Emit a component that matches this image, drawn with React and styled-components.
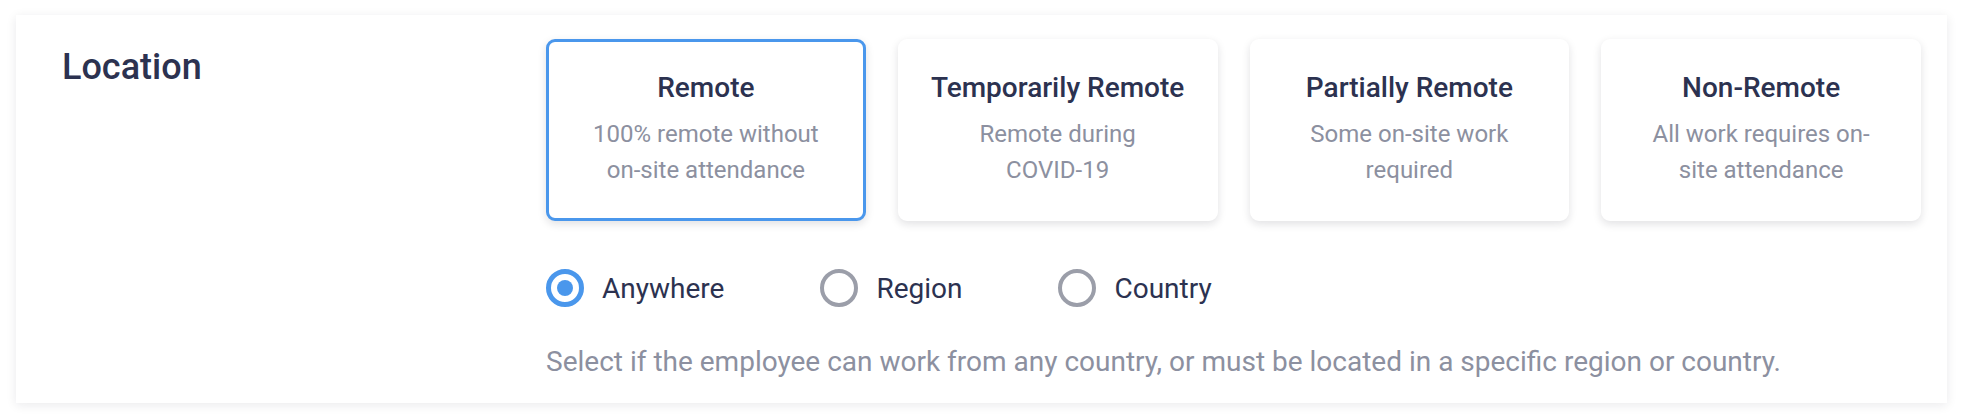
import React, { useState } from "react";
import styled, { createGlobalStyle } from "styled-components";

const GlobalStyle = createGlobalStyle`
  html, body { margin: 0; padding: 0; background: #ffffff; }
  body { font-family: Roboto, "Noto Sans", "Liberation Sans", sans-serif; -webkit-font-smoothing: antialiased; }
  * { box-sizing: border-box; }
`;

const Page = styled.div`
  padding: 15px 16px 17px 16px;
`;

const Panel = styled.section`
  display: grid;
  grid-template-columns: 484px 1fr;
  padding: 24px 26px 22px 46px;
  background: #fff;
  box-shadow: 0 2px 10px rgba(20, 24, 40, 0.09);
  height: 388px;
`;

const Label = styled.h2`
  margin: 7px 0 0;
  font-size: 36px;
  line-height: 42px;
  font-weight: 500;
  color: #2c3250;
`;

const Body = styled.div`
  display: flex;
  flex-direction: column;
`;

const Options = styled.div`
  display: grid;
  grid-template-columns: repeat(4, 1fr);
  gap: 32px;
`;

const OptionCard = styled.button`
  display: flex;
  flex-direction: column;
  align-items: center;
  text-align: center;
  padding: 30px 16px;
  background: #fff;
  border: 3px solid ${(p) => (p.$active ? "#4a97ec" : "#ffffff")};
  border-radius: 9px;
  box-shadow: 0 3px 8px rgba(20, 24, 40, 0.13);
  font-family: inherit;
  cursor: pointer;
`;

const CardTitle = styled.span`
  font-size: 28px;
  line-height: 32px;
  font-weight: 500;
  color: #2c3250;
  margin-bottom: 12px;
  white-space: nowrap;
`;

const CardText = styled.span`
  font-size: 24px;
  line-height: 36px;
  font-weight: 400;
  color: #8c90a0;
  max-width: 240px;
`;

const NoWrap = styled.span`
  white-space: nowrap;
`;

const RadioRow = styled.div`
  display: flex;
  gap: 96px;
  margin-top: 47px;
`;

const RadioItem = styled.label`
  display: flex;
  align-items: center;
  gap: 18px;
  height: 40px;
  cursor: pointer;
`;

const RadioCircle = styled.span`
  width: 38px;
  height: 38px;
  border-radius: 50%;
  border: ${(p) => (p.$checked ? "5px solid #4a97ec" : "4px solid #9b9ea9")};
  display: flex;
  align-items: center;
  justify-content: center;
  &::after {
    content: "";
    width: 16px;
    height: 16px;
    border-radius: 50%;
    background: #4a97ec;
    display: ${(p) => (p.$checked ? "block" : "none")};
  }
`;

const RadioText = styled.span`
  font-size: 28px;
  line-height: 38px;
  color: #2c3250;
  padding-top: 2px;
`;

const Help = styled.p`
  margin: 36px 0 0;
  font-size: 28px;
  line-height: 36px;
  color: #8c90a0;
  white-space: nowrap;
`;

const options = [
  { title: "Remote", text: "100% remote without on-site attendance" },
  { title: "Temporarily Remote", text: <>Remote during <NoWrap>COVID-19</NoWrap></> },
  { title: "Partially Remote", text: "Some on-site work required" },
  { title: "Non-Remote", text: "All work requires on-site attendance" },
];

const scopes = ["Anywhere", "Region", "Country"];

export default function App() {
  const [sel, setSel] = useState(0);
  const [scope, setScope] = useState(0);
  return (
    <Page>
      <GlobalStyle />
      <Panel>
        <Label>Location</Label>
        <Body>
          <Options>
            {options.map((o, i) => (
              <OptionCard key={o.title} $active={sel === i} onClick={() => setSel(i)}>
                <CardTitle>{o.title}</CardTitle>
                <CardText>{o.text}</CardText>
              </OptionCard>
            ))}
          </Options>
          <RadioRow>
            {scopes.map((s, i) => (
              <RadioItem key={s} onClick={() => setScope(i)}>
                <RadioCircle $checked={scope === i} />
                <RadioText>{s}</RadioText>
              </RadioItem>
            ))}
          </RadioRow>
          <Help>
            Select if the employee can work from any country, or must be located in a specific region or country.
          </Help>
        </Body>
      </Panel>
    </Page>
  );
}
